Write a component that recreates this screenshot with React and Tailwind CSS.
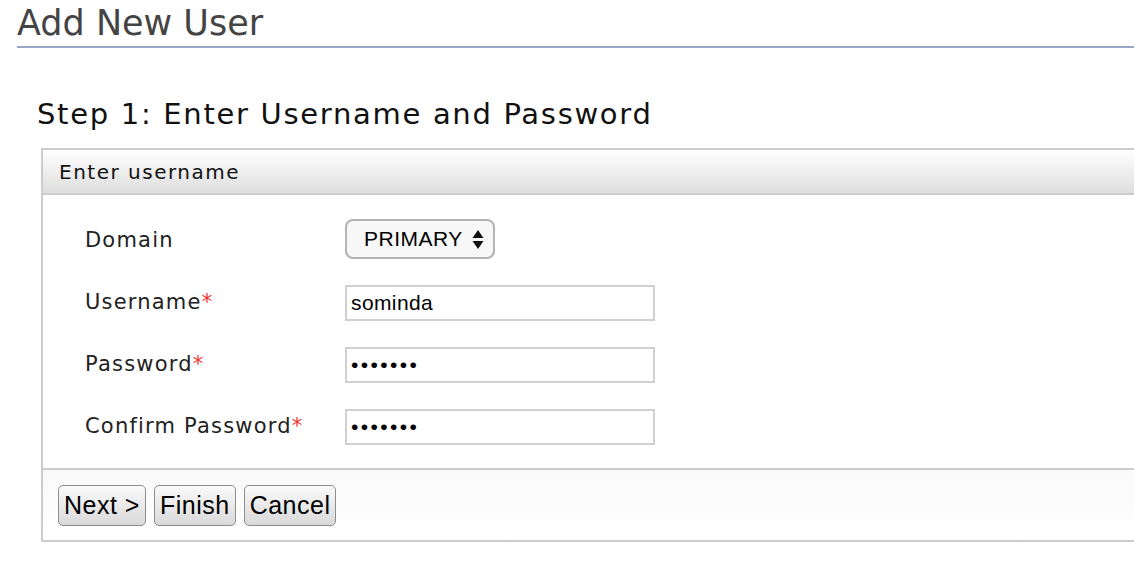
import React from 'react';

const lucida = { fontFamily: '"DejaVu Sans", "Lucida Grande", sans-serif' };

const Field = ({ label, required, children }) => (
  <div className="flex items-center h-[62px]">
    <label className="w-[260px] text-[21px] tracking-[1.2px] text-[#222]" style={lucida}>
      {label}
      {required && <span className="text-[#e33]">*</span>}
    </label>
    {children}
  </div>
);

const Button = ({ children }) => (
  <button className="h-[41px] px-[5px] rounded-[5px] border border-[#8e8e8e] bg-gradient-to-b from-[#fafafa] to-[#d9d9d9] text-[25px] tracking-[0.5px] text-black font-['Liberation_Sans',Arial,sans-serif] leading-none">
    {children}
  </button>
);

const inputCls =
  "h-[36px] w-[310px] border-2 border-[#d0d0d0] px-[4px] text-[21px] text-black font-['Liberation_Sans',Arial,sans-serif] outline-none";

export default function App() {
  return (
    <div className="w-[1134px] h-[570px] bg-white overflow-hidden">
      <div className="pl-[17px]">
        <h1
          className="text-[35px] leading-[46px] text-[#444] border-b-2 border-[#98a7c6]"
          style={lucida}
        >
          Add New User
        </h1>
      </div>

      <h2
        className="ml-[37px] mt-[46px] text-[29px] tracking-[1.7px] leading-[40px] text-[#111]"
        style={lucida}
      >
        Step 1: Enter Username and Password
      </h2>

      <div className="ml-[41px] mt-[14px] border-2 border-r-0 border-[#cccccc]">
        <div
          className="h-[45px] flex items-center pl-[16px] text-[20px] tracking-[1.5px] text-[#111] bg-gradient-to-b from-white to-[#dedede] border-b-2 border-[#cccccc]"
          style={lucida}
        >
          Enter username
        </div>

        <div className="pl-[42px] pt-[15px] pb-[10px]">
          <Field label="Domain">
            <div className="flex items-center gap-[9px] h-[40px] w-[150px] -mt-[4px] pl-[17px] rounded-[8px] border-2 border-[#b4b4b4] bg-[#f7f7f7] text-[21px] tracking-[0.5px] text-black font-['Liberation_Sans',Arial,sans-serif]">
              PRIMARY
              <svg width="12" height="24" viewBox="0 0 12 24">
                <path d="M6 3 L11.5 11 L0.5 11 Z" fill="#111" />
                <path d="M6 22 L11.5 14 L0.5 14 Z" fill="#111" />
              </svg>
            </div>
          </Field>
          <Field label="Username" required>
            <input readOnly value="sominda" className={inputCls + ' tracking-[0.4px]'} />
          </Field>
          <Field label="Password" required>
            <input readOnly type="password" value="1234567" className={inputCls + ' tracking-[2.4px]'} />
          </Field>
          <Field label="Confirm Password" required>
            <input readOnly type="password" value="1234567" className={inputCls + ' tracking-[2.4px]'} />
          </Field>
        </div>

        <div className="h-[72px] flex items-center gap-[8px] pl-[15px] border-t-2 border-[#cccccc] bg-gradient-to-b from-[#f9f9f9] to-white">
          <Button>Next &gt;</Button>
          <Button>Finish</Button>
          <Button>Cancel</Button>
        </div>
      </div>
    </div>
  );
}
